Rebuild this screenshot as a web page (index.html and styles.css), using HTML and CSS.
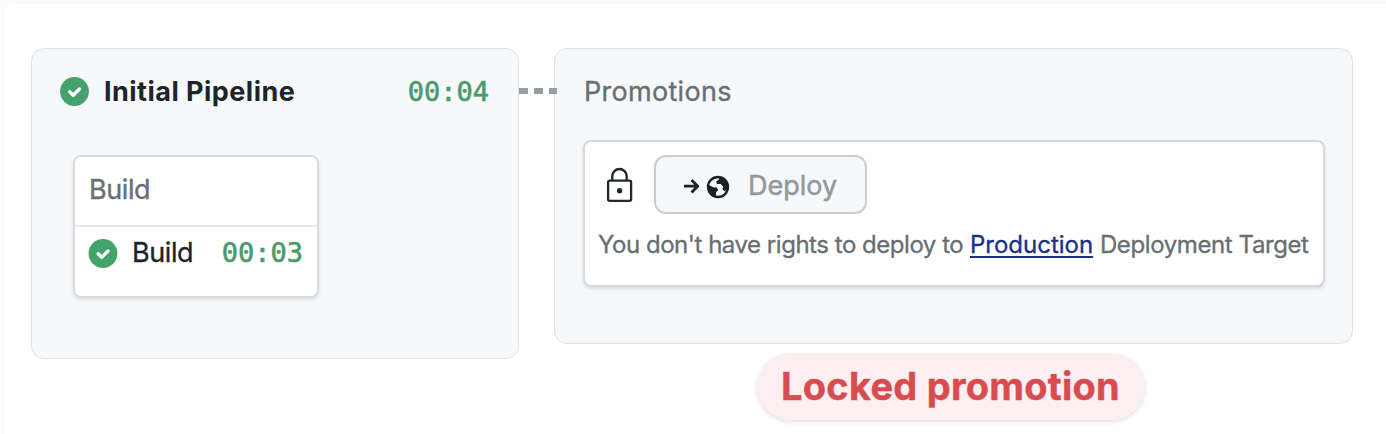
FILE: index.html
```html
<!DOCTYPE html>
<html lang="en">
<head>
<meta charset="utf-8">
<title>Initial Pipeline</title>
<link rel="stylesheet" href="styles.css">
</head>
<body>
<main class="page">
  <section class="panel pipeline">
    <header class="panel-head">
      <svg class="check" viewBox="0 0 30 30"><circle cx="14.500" cy="14.500" r="14.400"/><path d="M9.700 14.800l3.500 3.500 6.300-6.300"/></svg>
      <h1 class="title">Initial Pipeline</h1>
      <span class="time">00:04</span>
    </header>
    <div class="block">
      <div class="block-title"><span class="label">Build</span></div>
      <div class="job">
        <svg class="check" viewBox="0 0 30 30"><circle cx="15" cy="15.500" r="14.400"/><path d="M10.200 15.800l3.500 3.500 6.300-6.300"/></svg>
        <span class="job-name label">Build</span>
        <span class="time">00:03</span>
      </div>
    </div>
  </section>
  <div class="connector"><i></i><i></i><i></i></div>
  <div class="side">
    <section class="panel promotions">
      <h2 class="subtitle">Promotions</h2>
      <div class="promo">
        <div class="promo-row">
          <svg class="lock" viewBox="0 0 28 36"><rect x="2.1" y="13.6" width="23" height="20.3" rx="1.6"/><path d="M6.3 13V9.2a7.2 7.2 0 0 1 14.4 0V13"/><circle cx="13.6" cy="23.8" r="2.7"/></svg>
          <button class="deploy" disabled>
            <svg class="arrow" viewBox="0 0 16 16"><path d="M1 8.200h13.500M8.500 2l6.200 6.200-6.200 6.200"/></svg>
            <svg class="globe" viewBox="0 0 24 24"><circle cx="12" cy="12" r="10"/><path d="M2 9.500l5.200 2.700 3.600.3 1.400 2.400-2 2.200-.5 4.300-3-1.200C3.500 18 2 14.500 2 9.500zM13.600 2.200l-1 2.600-2.500 1.600.9 2.500 3.700.1 2.400 2.500-.6 3 1.900 1.800 2.500-1.600C23.200 8.500 20 3 13.600 2.200z"/></svg>
            <span class="deploy-text">Deploy</span>
          </button>
        </div>
        <p class="message"><span class="reason">You don't have rights to deploy to</span> <a class="link" href="#">Production</a> <span class="target">Deployment Target</span></p>
      </div>
    </section>
    <div class="tag"><span class="tag-text">Locked promotion</span></div>
  </div>
</main>
</body>
</html>
```
FILE: styles.css
```css
* { box-sizing: border-box; }
body {
  margin: 0;
  padding: 4px 0 0 5px;
  height: 434px;
  overflow: hidden;
  background: #fbfbfb;
  color: #1c2529;
  font-family: Inter, "Liberation Sans", sans-serif;
  font-size: 27px;
}
.page {
  display: flex;
  align-items: flex-start;
  height: 430px;
  padding: 44px 0 0 26px;
  background: #fff;
  border-top-left-radius: 8px;
  box-shadow: 0 0 2px #f3f3f3;
}
.panel {
  background: #f6f8fa;
  border: 1px solid #dfe2e5;
  border-radius: 13px;
}
.pipeline { width: 488px; height: 311px; padding: 26px 29px 0 28px; }
.panel-head { display: flex; align-items: center; height: 34px; }
.check { width: 30px; height: 30px; flex: none; fill: #44a36a; }
.check path { fill: none; stroke: #fff; stroke-width: 3.4; stroke-linecap: round; stroke-linejoin: round; }
h1, h2, p { margin: 0; white-space: nowrap; }
.title { margin-left: 14px; font-size: 27px; line-height: 34px; font-weight: 700; letter-spacing: 0.47px; }
.time { margin-left: auto; font-family: "DejaVu Sans Mono", monospace; font-size: 27px; line-height: 34px; color: #4a9b6c; -webkit-text-stroke: 0.6px #4a9b6c; }
.block {
  width: 246px;
  height: 143px;
  margin: 46px 0 0 13px;
  background: #fff;
  border: 2px solid #d9dcdf;
  border-radius: 8px;
  box-shadow: 0 2px 3px #dcdfe2;
}
.block-title { height: 70px; padding: 16px 14px 0; line-height: 34px; border-bottom: 2px solid #e4e6e7; color: #686f73; }
.label { letter-spacing: -0.4px; -webkit-text-stroke: 0.35px currentColor; }
.job { display: flex; align-items: center; height: 51px; padding: 0 14px 0 13px; }
.job-name { margin-left: 14px; line-height: 34px; }
.connector { display: flex; gap: 6px; width: 35px; padding-top: 40px; z-index: 1; }
.connector i { flex: none; width: 9px; height: 6px; background: #929ea1; }
.connector i:last-child { width: 8px; }
.side { display: flex; flex-direction: column; }
.promotions { width: 799px; height: 296px; padding: 26px 28px 0; }
.subtitle { padding-left: 1px; font-size: 27px; line-height: 34px; font-weight: 400; letter-spacing: 0.3px; color: #686f73; -webkit-text-stroke: 0.35px currentColor; }
.promo {
  width: 742px;
  height: 147px;
  margin-top: 31px;
  padding: 13px 13px 0;
  background: #fff;
  border: 2px solid #d7dadd;
  border-radius: 8px;
  box-shadow: 0 2px 3px #dcdfe2;
}
.promo-row { display: flex; align-items: center; }
.lock { width: 28px; height: 36px; margin-left: 8px; fill: none; stroke: #20282b; stroke-width: 2.3; }
.lock circle { fill: #20282b; stroke: none; }
.deploy {
  display: flex;
  align-items: center;
  width: 213px;
  height: 59px;
  margin-left: 20px;
  padding: 2px 0 0 27px;
  background: #f6f8fa;
  border: 2px solid #cbcdcf;
  border-radius: 12px;
  font: 27px/34px Inter, "Liberation Sans", sans-serif;
  color: #92999e;
}
.arrow { width: 16px; height: 16px; margin-top: 1px; fill: none; stroke: #172326; stroke-width: 2.8; }
.globe { width: 24px; height: 24px; margin: 3px 0 0 7px; fill: #172326; stroke: none; }
.globe circle { fill: none; stroke: #172326; stroke-width: 2.3; }
.deploy-text { margin: 0 0 0 18px; -webkit-text-stroke: 0.5px currentColor; }
.message { margin-top: 15px; font-size: 24px; line-height: 32px; color: #686f73; -webkit-text-stroke: 0.35px currentColor; }
.reason { letter-spacing: -0.47px; }
.target { letter-spacing: -0.4px; }
.link { color: #1b3185; text-decoration: underline; text-decoration-thickness: 2px; text-underline-offset: 3px; }
.tag {
  align-self: center;
  display: flex;
  justify-content: center;
  width: 388px;
  height: 67px;
  margin: 9px 6px 0 0;
  background: #fbeff1;
  border-radius: 34px;
  box-shadow: 0 2px 4px #e4e0e1;
  color: #d84c50;
}
.tag-text { font-size: 38px; line-height: 67px; font-weight: 700; letter-spacing: 0.25px; -webkit-text-stroke: 0.4px currentColor; }
```
